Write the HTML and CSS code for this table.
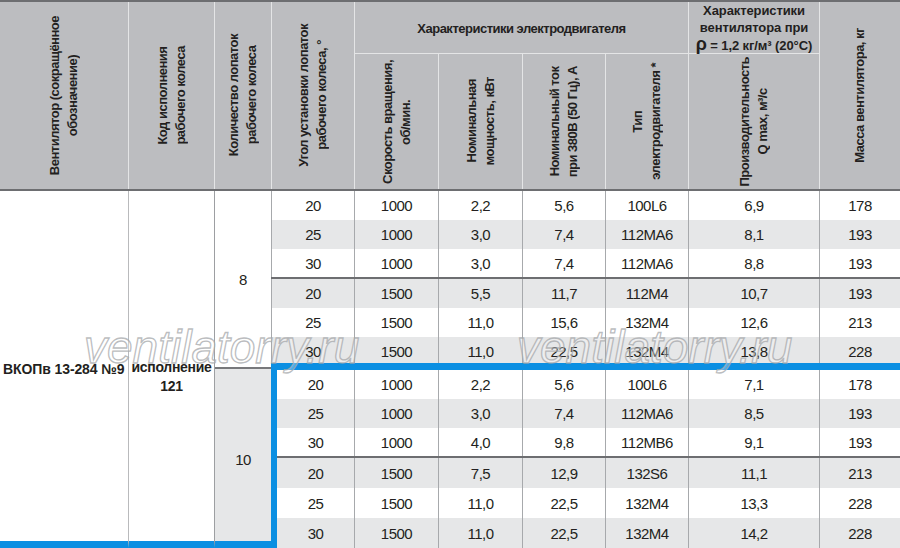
FILE: index.html
```html
<!DOCTYPE html>
<html lang="ru">
<head>
<meta charset="utf-8">
<title>ВКОПв 13-284 №9</title>
<link rel="stylesheet" href="styles.css">
</head>
<body>
<div class="sheet">
  <div class="head">
    <div class="hc c1 span2"><span class="vt">Вентилятор (сокращённое<br>обозначение)</span></div>
    <div class="hc c2 span2 sep"><span class="vt">Код исполнения<br>рабочего колеса</span></div>
    <div class="hc c3 span2 sep"><span class="vt">Количество лопаток<br>рабочего колеса</span></div>
    <div class="hc c4 span2 sep"><span class="vt">Угол установки лопаток<br>рабочего колеса, °</span></div>
    <div class="hc group motor sep under"><span>Характеристики электродвигателя</span></div>
    <div class="hc group fan sep under"><span class="fantxt">Характеристики<br>вентилятора при<br><span class="rho">ρ</span> = 1,2 кг/м³ (20°С)</span></div>
    <div class="hc c10 span2 sep"><span class="vt">Масса вентилятора, кг</span></div>
    <div class="hc r2 c5 sep"><span class="vt">Скорость вращения,<br>об/мин.</span></div>
    <div class="hc r2 c6 sep"><span class="vt">Номинальная<br>мощность, кВт</span></div>
    <div class="hc r2 c7 sep"><span class="vt">Номинальный ток<br>при 380В (50 Гц), А</span></div>
    <div class="hc r2 c8 sep"><span class="vt">Тип<br>электродвигателя *</span></div>
    <div class="hc r2 c9 sep"><span class="vt">Производительность<br>Q max, м³/с</span></div>
  </div>

  <div class="body">
    <div class="bc model"><span>ВКОПв 13-284 №9</span></div>
    <div class="bc code"><span>исполнение<br>121</span></div>
    <div class="bc blades b8"><span>8</span></div>
    <div class="bc blades b10"><span>10</span></div>

    <div class="d first">20</div><div class="d">1000</div><div class="d">2,2</div><div class="d">5,6</div><div class="d">100L6</div><div class="d">6,9</div><div class="d">178</div>
    <div class="d first g">25</div><div class="d g">1000</div><div class="d g">3,0</div><div class="d g">7,4</div><div class="d g">112MA6</div><div class="d g">8,1</div><div class="d g">193</div>
    <div class="d first">30</div><div class="d">1000</div><div class="d">3,0</div><div class="d">7,4</div><div class="d">112MA6</div><div class="d">8,8</div><div class="d">193</div>
    <div class="rule"></div>
    <div class="d first g">20</div><div class="d g">1500</div><div class="d g">5,5</div><div class="d g">11,7</div><div class="d g">112M4</div><div class="d g">10,7</div><div class="d g">193</div>
    <div class="d first">25</div><div class="d">1500</div><div class="d">11,0</div><div class="d">15,6</div><div class="d">132M4</div><div class="d">12,6</div><div class="d">213</div>
    <div class="d first g low">30</div><div class="d g low">1500</div><div class="d g low">11,0</div><div class="d g low">22,5</div><div class="d g low">132M4</div><div class="d g low">13,8</div><div class="d g low">228</div>
    <div class="blue"></div>
    <div class="d first bl">20</div><div class="d">1000</div><div class="d">2,2</div><div class="d">5,6</div><div class="d">100L6</div><div class="d">7,1</div><div class="d">178</div>
    <div class="d first bl g">25</div><div class="d g">1000</div><div class="d g">3,0</div><div class="d g">7,4</div><div class="d g">112MA6</div><div class="d g">8,5</div><div class="d g">193</div>
    <div class="d first bl">30</div><div class="d">1000</div><div class="d">4,0</div><div class="d">9,8</div><div class="d">112MB6</div><div class="d">9,1</div><div class="d">193</div>
    <div class="rule blrule"></div>
    <div class="d first bl g">20</div><div class="d g">1500</div><div class="d g">7,5</div><div class="d g">12,9</div><div class="d g">132S6</div><div class="d g">11,1</div><div class="d g">213</div>
    <div class="d first bl">25</div><div class="d">1500</div><div class="d">11,0</div><div class="d">22,5</div><div class="d">132M4</div><div class="d">13,3</div><div class="d">228</div>
    <div class="d first bl g">30</div><div class="d g">1500</div><div class="d g">11,0</div><div class="d g">22,5</div><div class="d g">132M4</div><div class="d g">14,2</div><div class="d g">228</div>
  </div>

  <div class="wm wm1">ventilatorry.ru</div>
  <div class="wm wm2">ventilatorry.ru</div>
</div>
</body>
</html>
```

FILE: styles.css
```css
* { box-sizing: border-box; }
html, body { margin: 0; padding: 0; background: #fff; }
body {
  font-family: "Liberation Sans", Arial, sans-serif;
  color: #231f20;
}
.sheet {
  position: relative;
  width: 900px;
  height: 548px;
  overflow: hidden;
}
.head {
  display: grid;
  grid-template-columns: 128px 86px 57px 83px 84px 84px 83px 83px 131px 81px;
  grid-template-rows: 52px 135px;
  background: #bcbdc0;
  border-top: 2px solid #6d6e71;
  border-bottom: 2px solid #6d6e71;
  font-weight: bold;
  font-size: 13px;
  color: #231f20;
}
.hc {
  display: flex;
  align-items: center;
  justify-content: center;
  text-align: center;
}
.sep { border-left: 1px solid #e4e5e6; }
.under { border-bottom: 1px solid #e4e5e6; }
.span2 { grid-row: 1 / 3; }
.c1 { grid-column: 1; }
.c2 { grid-column: 2; }
.c3 { grid-column: 3; }
.c4 { grid-column: 4; }
.motor { grid-column: 5 / 9; grid-row: 1; padding-top: 2px; letter-spacing: -0.5px; }
.fan { grid-column: 9; grid-row: 1; padding-top: 3px; letter-spacing: -0.1px; }
.fantxt { line-height: 16.5px; white-space: nowrap; }
.c10 { grid-column: 10; }
.r2 { grid-row: 2; }
.c5 { grid-column: 5; }
.c6 { grid-column: 6; }
.c7 { grid-column: 7; }
.c8 { grid-column: 8; }
.c9 { grid-column: 9; }
.rho { font-size: 18px; }
.vt {
  writing-mode: vertical-rl;
  transform: rotate(180deg);
  line-height: 18px;
  letter-spacing: -0.5px;
  white-space: nowrap;
}

.body {
  display: grid;
  grid-template-columns: 128px 86px 57px 83px 84px 84px 83px 83px 131px 81px;
  grid-template-rows: 29px 29px 28px 2px 29px 29px 26px 7px 29px 29px 28px 2px 30px 30px 30px;
  font-size: 15px;
  letter-spacing: -0.5px;
}
.bc {
  display: flex;
  align-items: center;
  justify-content: center;
  text-align: center;
  font-weight: bold;
  font-size: 14px;
}
.model {
  grid-column: 1;
  grid-row: 1 / -1;
  border-bottom: 7px solid #0b8fe2;
  padding-top: 6px;
  justify-content: flex-start;
  padding-left: 3px;
  white-space: nowrap;
  letter-spacing: -0.1px;
}
.code {
  grid-column: 2;
  grid-row: 1 / -1;
  border-left: 1px solid #b9babc;
  border-bottom: 7px solid #0b8fe2;
  line-height: 19px;
  padding-top: 21px;
  letter-spacing: -0.3px;
}
.blades { font-weight: normal; font-size: 15px; border-left: 1px solid #9d9fa2; grid-column: 3; }
.b8 { grid-row: 1 / 8; padding-top: 4px; }
.b10 {
  grid-row: 8 / -1;
  background: linear-gradient(#fff 0 4px, #77787b 4px 6px, #e6e7e8 6px);
  border-bottom: 7px solid #0b8fe2;
  padding-top: 14px;
}
.d {
  display: flex;
  align-items: center;
  justify-content: center;
  border-left: 1px solid #a7a9ac;
}
.d.g { background: #e6e7e8; }
.d.low { padding-top: 3px; }
.d.bl { border-left: 6px solid #0b8fe2; }
.rule { grid-column: 4 / -1; background: #6d6e71; }
.blue { grid-column: 4 / -1; background: #0b8fe2; }
.blrule { border-left: 6px solid #0b8fe2; }

.wm {
  position: absolute;
  top: 324px;
  font-family: "Liberation Sans", Arial, sans-serif;
  font-style: italic;
  font-size: 46px;
  line-height: 1;
  color: rgba(255, 255, 255, 0.3);
  -webkit-text-stroke: 1.3px rgba(165, 167, 170, 0.75);
  white-space: nowrap;
  pointer-events: none;
}
.wm1 { left: 84px; }
.wm2 { left: 517px; }
```
